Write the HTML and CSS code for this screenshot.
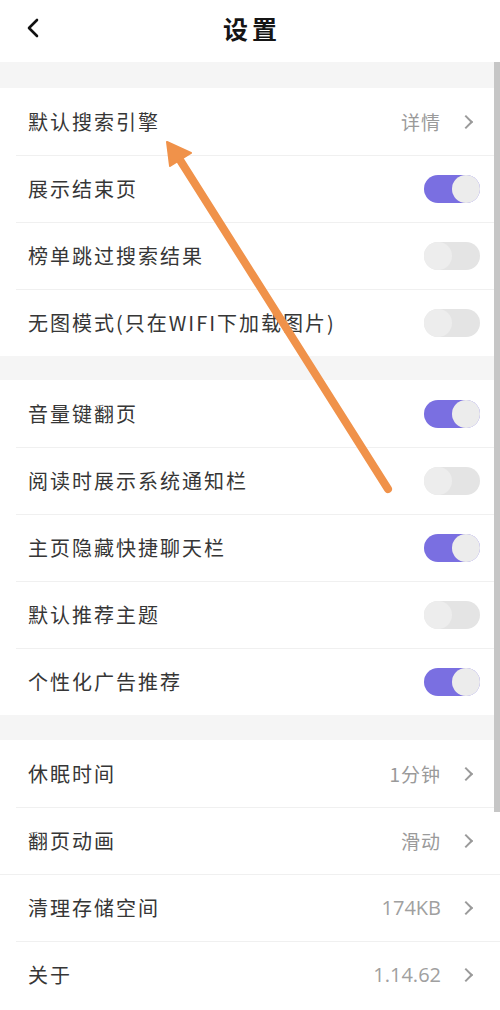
FILE: index.html
```html
<!DOCTYPE html>
<html lang="zh">
<head>
<meta charset="utf-8">
<link rel="stylesheet" href="styles.css">
</head>
<body>
<div class="page">
  <header class="topbar">
    <svg class="back" width="14" height="20" viewBox="0 0 14 20"><path d="M11 2 L3 10 L11 18" fill="none" stroke="#111" stroke-width="2.6" stroke-linecap="round" stroke-linejoin="round"/></svg>
    <h1 class="title">设置</h1>
  </header>

  <div class="band b1"></div>
  <section class="group">
    <div class="row"><span class="label">默认搜索引擎</span><span class="value">详情</span><span class="chev"></span></div>
    <div class="row"><span class="label">展示结束页</span><span class="toggle on"></span></div>
    <div class="row"><span class="label">榜单跳过搜索结果</span><span class="toggle"></span></div>
    <div class="row"><span class="label">无图模式(只在WIFI下加载图片)</span><span class="toggle"></span></div>
  </section>

  <div class="band b2"></div>
  <section class="group">
    <div class="row"><span class="label">音量键翻页</span><span class="toggle on"></span></div>
    <div class="row"><span class="label">阅读时展示系统通知栏</span><span class="toggle"></span></div>
    <div class="row"><span class="label">主页隐藏快捷聊天栏</span><span class="toggle on"></span></div>
    <div class="row"><span class="label">默认推荐主题</span><span class="toggle"></span></div>
    <div class="row"><span class="label">个性化广告推荐</span><span class="toggle on"></span></div>
  </section>

  <div class="band b3"></div>
  <section class="group">
    <div class="row"><span class="label">休眠时间</span><span class="value">1分钟</span><span class="chev"></span></div>
    <div class="row"><span class="label">翻页动画</span><span class="value">滑动</span><span class="chev"></span></div>
    <div class="row full"><span class="label">清理存储空间</span><span class="value num">174KB</span><span class="chev"></span></div>
    <div class="row"><span class="label">关于</span><span class="value num">1.14.62</span><span class="chev"></span></div>
  </section>

  <div class="scrollbar"></div>
  <svg class="arrow" width="500" height="1010" viewBox="0 0 500 1010">
    <line x1="388" y1="489" x2="180" y2="160" stroke="#f0924a" stroke-width="8" stroke-linecap="round"/>
    <polygon points="167,142 191,153 170,166" fill="#f0924a" stroke="#f0924a" stroke-width="2" stroke-linejoin="round"/>
  </svg>
</div>
</body>
</html>
```

FILE: styles.css
```css
html, body {
  margin: 0;
  padding: 0;
  background: #ffffff;
}
.page {
  position: relative;
  width: 500px;
  height: 1010px;
  overflow: hidden;
  font-family: "Noto Sans CJK SC", "Noto Sans", sans-serif;
  color: #3a3a3a;
}
.topbar {
  height: 62px;
  box-sizing: border-box;
  padding-bottom: 6px;
  display: flex;
  align-items: center;
  justify-content: center;
  position: relative;
  background: #fff;
}
.back {
  position: absolute;
  left: 26px;
  top: 18px;
}
.title {
  margin: 0;
  font-size: 25px;
  font-weight: 700;
  letter-spacing: 4px;
  color: #151515;
  line-height: 1;
  padding-left: 4px;
}
.band {
  background: #f5f5f5;
}
.b1 { height: 26px; }
.b2 { height: 24px; }
.b3 { height: 25px; }
.group {
  display: flex;
  flex-direction: column;
}
.row {
  height: 67px;
  display: flex;
  align-items: center;
  padding: 0 20px 0 28px;
  position: relative;
  box-sizing: border-box;
}
.row + .row::before {
  content: "";
  position: absolute;
  left: 16px;
  right: 0;
  top: 0;
  height: 1px;
  background: #f0f0f0;
}
.row.full::before {
  left: 0;
}
.label {
  flex: 1;
  font-size: 20px;
  letter-spacing: 2px;
  color: #363636;
  line-height: 1;
}
.value {
  font-size: 19px;
  color: #9a9a9a;
  line-height: 1;
  letter-spacing: 1px;
}
.value.num {
  font-family: "Open Sans", "Noto Sans", sans-serif;
  letter-spacing: 0;
  font-size: 20px;
  color: #a0a0a0;
}
.chev {
  width: 8px;
  height: 8px;
  border-right: 2px solid #9a9a9a;
  border-top: 2px solid #9a9a9a;
  transform: rotate(45deg);
  margin-left: 20px;
  margin-right: 9px;
}
.toggle {
  width: 56px;
  height: 28px;
  border-radius: 14px;
  background: #e4e4e4;
  position: relative;
}
.toggle::after {
  content: "";
  position: absolute;
  top: 0;
  left: 0;
  width: 28px;
  height: 28px;
  border-radius: 50%;
  background: #ededed;
}
.toggle.on {
  background: #7a6fe1;
}
.toggle.on::after {
  left: 28px;
  background: #ececec;
}
.scrollbar {
  position: absolute;
  right: 0;
  top: 62px;
  width: 6px;
  height: 750px;
  background: #c6c6c6;
}
.arrow {
  position: absolute;
  left: 0;
  top: 0;
  pointer-events: none;
}
```
